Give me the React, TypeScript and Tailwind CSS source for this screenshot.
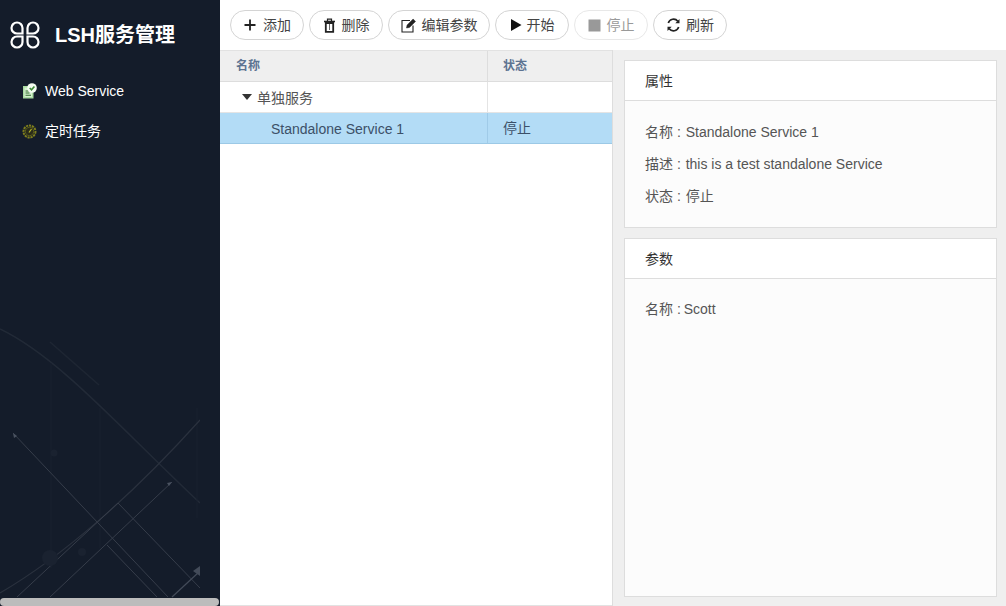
import { ReactNode } from 'react'

const fontStack = "font-['Liberation_Sans','Noto_Sans_CJK_SC',sans-serif]"

function LogoIcon() {
  return (
    <svg width="30" height="28" viewBox="0 0 30 28" fill="none" stroke="white" strokeWidth="2.200">
      <path d="M12.500 12.500H7a5.500 5.500 0 1 1 5.500-5.500z" />
      <path d="M17.500 12.500H23a5.500 5.500 0 1 0-5.500-5.500z" />
      <path d="M12.500 15.500H7a5.500 5.500 0 1 0 5.500 5.500z" />
      <path d="M17.500 15.500H23a5.500 5.500 0 1 1-5.500 5.500z" />
    </svg>
  )
}

function WebServiceIcon() {
  return (
    <svg width="15" height="16" viewBox="0 0 15 16">
      <path d="M1 3h10.500v12.500H1z" fill="#a9dba0" />
      <path d="M2.500 4.500h7.500v9.500H2.500z" fill="#d4efcd" />
      <path d="M3.500 8h3.500M3.500 10h4M3.500 12.300h5.500" stroke="#2c6a2a" strokeWidth="1.100" />
      <circle cx="10" cy="5" r="4.800" fill="#f4fbf1" />
      <path d="M7.700 5l1.800 1.800 2.900-3.400" fill="none" stroke="#3d8a35" strokeWidth="1.600" />
    </svg>
  )
}

function TimerIcon() {
  return (
    <svg width="15" height="15" viewBox="0 0 15 15" fill="none">
      <circle cx="7.500" cy="7.500" r="6" stroke="#7f7f1c" strokeWidth="2" strokeDasharray="2.200 0.800" />
      <circle cx="7.500" cy="7.500" r="4.200" fill="#2a2c1a" stroke="#6a6a18" strokeWidth="0.800" />
      <path d="M7 8.500l2.500-3.500" stroke="#b5b52a" strokeWidth="1.200" />
    </svg>
  )
}

function SidebarArt() {
  return (
    <svg className="absolute left-0 bottom-2" width="200" height="280" viewBox="0 0 200 280" fill="none">
      <path d="M0 11C60 40 120 110 200 185" stroke="#222a37" strokeWidth="1.500" />
      <path d="M50 24L99 67" stroke="#1e2633" strokeWidth="1.500" />
      <path d="M51 45V250M100 90V230M197 90V200" stroke="#19212e" strokeWidth="1" />
      <path d="M0 275C60 240 130 180 200 102" stroke="#2a313e" strokeWidth="1.200" />
      <path d="M13 115L168 279" stroke="#363d4a" strokeWidth="1" />
      <path d="M13 115l1 5 3-2z" fill="#4a5260" />
      <path d="M17 279L118 185L200 270" stroke="#363d4a" strokeWidth="1" />
      <path d="M50 279L172 164" stroke="#363d4a" strokeWidth="1" />
      <path d="M172 164l-5 1 2 3z" fill="#4a5260" />
      <path d="M107 227L157 279" stroke="#363d4a" strokeWidth="1" />
      <path d="M172 279L199 254" stroke="#434b59" strokeWidth="1.200" />
      <path d="M200 248l-7 5 7 5z" fill="#434b59" />
      <circle cx="50" cy="240" r="8" fill="#1a2230" />
      <circle cx="82" cy="234" r="4" fill="#1a2230" />
      <circle cx="54" cy="135" r="3.500" fill="#1a2230" />
    </svg>
  )
}

function NavItem({ icon, label, className }: { icon: ReactNode; label: string; className?: string }) {
  return (
    <div className={`relative flex items-center h-5 pl-[22px] gap-[8px] text-sm text-white ${className ?? ''}`}>
      {icon}
      <span>{label}</span>
    </div>
  )
}

function ToolButton({ icon, label, width, disabled, gap }: { icon: ReactNode; label: string; width: string; disabled?: boolean; gap: string }) {
  return (
    <button
      className={`flex items-center justify-center h-[30px] rounded-full border bg-white text-sm ${width} ${gap} ${
        disabled ? 'border-[#e8e8e8] text-[#999]' : 'border-[#d4d4d4] text-[#444]'
      }`}
    >
      {icon}
      <span>{label}</span>
    </button>
  )
}

function Panel({ title, children, className }: { title: string; children: ReactNode; className?: string }) {
  return (
    <div className={`flex flex-col border border-[#dddddd] bg-[#fcfcfc] ${className ?? ''}`}>
      <div className="flex items-center h-10 pl-5 text-sm text-[#333] bg-white border-b border-[#dddddd] shrink-0">{title}</div>
      <div className="flex flex-col px-5 text-sm leading-5 text-[#555]">{children}</div>
    </div>
  )
}

export default function App() {
  return (
    <div className={`flex w-[1006px] h-[606px] overflow-hidden bg-white ${fontStack}`}>
      <aside className="relative flex flex-col w-[220px] shrink-0 bg-[#141c2a]">
        <SidebarArt />
        <div className="relative flex items-center pl-[10px] pt-[21px] gap-[15px]">
          <LogoIcon />
          <span className="text-xl -mt-px font-bold text-white">LSH服务管理</span>
        </div>
        <NavItem className="mt-[32px]" icon={<WebServiceIcon />} label="Web Service" />
        <NavItem className="mt-5" icon={<TimerIcon />} label="定时任务" />
        <div className="absolute left-0 bottom-0 w-[219px] h-2 rounded-sm bg-[#bcbcbc]" />
      </aside>

      <main className="flex flex-col flex-1 min-w-0">
        <div className="flex items-center gap-[5px] h-[50px] pl-[10px] shrink-0">
          <ToolButton
            width="w-[74px]"
            gap="gap-[6px]"
            label="添加"
            icon={
              <svg width="14" height="14" viewBox="0 0 14 14"><path d="M7 1.500v11M1.500 7h11" stroke="#222" strokeWidth="1.800" /></svg>
            }
          />
          <ToolButton
            width="w-[74px]"
            gap="gap-[6px]"
            label="删除"
            icon={
              <svg width="13" height="15" viewBox="0 0 13 15" fill="none" stroke="#222">
                <path d="M1 3.500h11" strokeWidth="1.600" />
                <path d="M4.500 3V1.200h4V3" strokeWidth="1.200" />
                <path d="M2.800 5h7.400v8.800H2.800z" strokeWidth="1.800" />
                <path d="M6.500 6v6" strokeWidth="1" stroke="#666" />
              </svg>
            }
          />
          <ToolButton
            width="w-[102px]"
            gap="gap-[6px]"
            label="编辑参数"
            icon={
              <svg width="15" height="15" viewBox="0 0 15 15" fill="none" stroke="#222">
                <path d="M9 2.500H1v11.500h11V7.500" strokeWidth="1.100" />
                <path d="M5.500 10l.6-3 6-6 2.400 2.400-6 6z" fill="#222" strokeWidth="0.500" />
              </svg>
            }
          />
          <ToolButton
            width="w-[74px]"
            gap="gap-[5px]"
            label="开始"
            icon={
              <svg width="12" height="14" viewBox="0 0 12 14"><path d="M1 1L11.500 7 1 13z" fill="#111" /></svg>
            }
          />
          <ToolButton
            width="w-[74px]"
            gap="gap-[6px]"
            label="停止"
            disabled
            icon={
              <svg width="13" height="13" viewBox="0 0 13 13"><path d="M0.500 0.500h12v12H0.500z" fill="#999" /></svg>
            }
          />
          <ToolButton
            width="w-[74px]"
            gap="gap-[5px]"
            label="刷新"
            icon={
              <svg width="15" height="14" viewBox="0 0 15 14" fill="none" stroke="#222" strokeWidth="1.700">
                <path d="M2.300 5A5.500 5.500 0 0 1 11.800 3.200M12.700 9A5.500 5.500 0 0 1 3.200 10.800" />
                <path d="M13.500 1v4.200H9.300zM1.500 13V8.800h4.200z" stroke="none" fill="#222" />
              </svg>
            }
          />
        </div>

        <div className="flex flex-1 min-h-0">
          <section className="flex flex-col w-[392px] shrink-0 border-t border-b border-[#e2e2e2]">
            <div className="grid grid-cols-[268px_1fr] h-[31px] bg-[#efefef] border-b border-[#dddddd] text-xs font-bold text-[#5c7391]">
              <div className="flex items-center pl-4 border-r border-[#dddddd]">名称</div>
              <div className="flex items-center pl-[15px]">状态</div>
            </div>
            <div className="grid grid-cols-[268px_1fr] h-[31px] border-b border-[#e4e4e4] text-sm text-[#555]">
              <div className="flex items-center pt-[2px] pl-[22px] gap-[5px] border-r border-[#e4e4e4]">
                <span className="w-0 h-0 -mt-[2px] border-x-[5px] border-x-transparent border-t-[6px] border-t-[#333]" />
                <span>单独服务</span>
              </div>
              <div />
            </div>
            <div className="grid grid-cols-[268px_1fr] h-[31px] bg-[#b3dcf6] border-b border-[#9cc9e6] text-sm text-[#3c5068]">
              <div className="flex items-center pt-[2px] pl-[51px] border-r border-[#a0cbe8]">Standalone Service 1</div>
              <div className="flex items-center pl-[15px]">停止</div>
            </div>
          </section>

          <section className="flex flex-col flex-1 min-w-0 gap-[10px] pt-[10px] pb-[9px] pl-[11px] pr-[9px] bg-[#efefef] border-l border-[#dddddd]">
            <Panel title="属性" className="h-[168px] shrink-0">
              <div className="flex flex-col gap-3 pt-[21px]">
                <div>名称 :&nbsp;<span className="ml-px">Standalone Service 1</span></div>
                <div>描述 :&nbsp;<span className="ml-px">this is a test standalone Service</span></div>
                <div>状态 :&nbsp;<span className="ml-px">停止</span></div>
              </div>
            </Panel>
            <Panel title="参数" className="flex-1 min-h-0">
              <div className="pt-5">名称 :&nbsp;<span className="-ml-px">Scott</span></div>
            </Panel>
          </section>
        </div>
      </main>
    </div>
  )
}
